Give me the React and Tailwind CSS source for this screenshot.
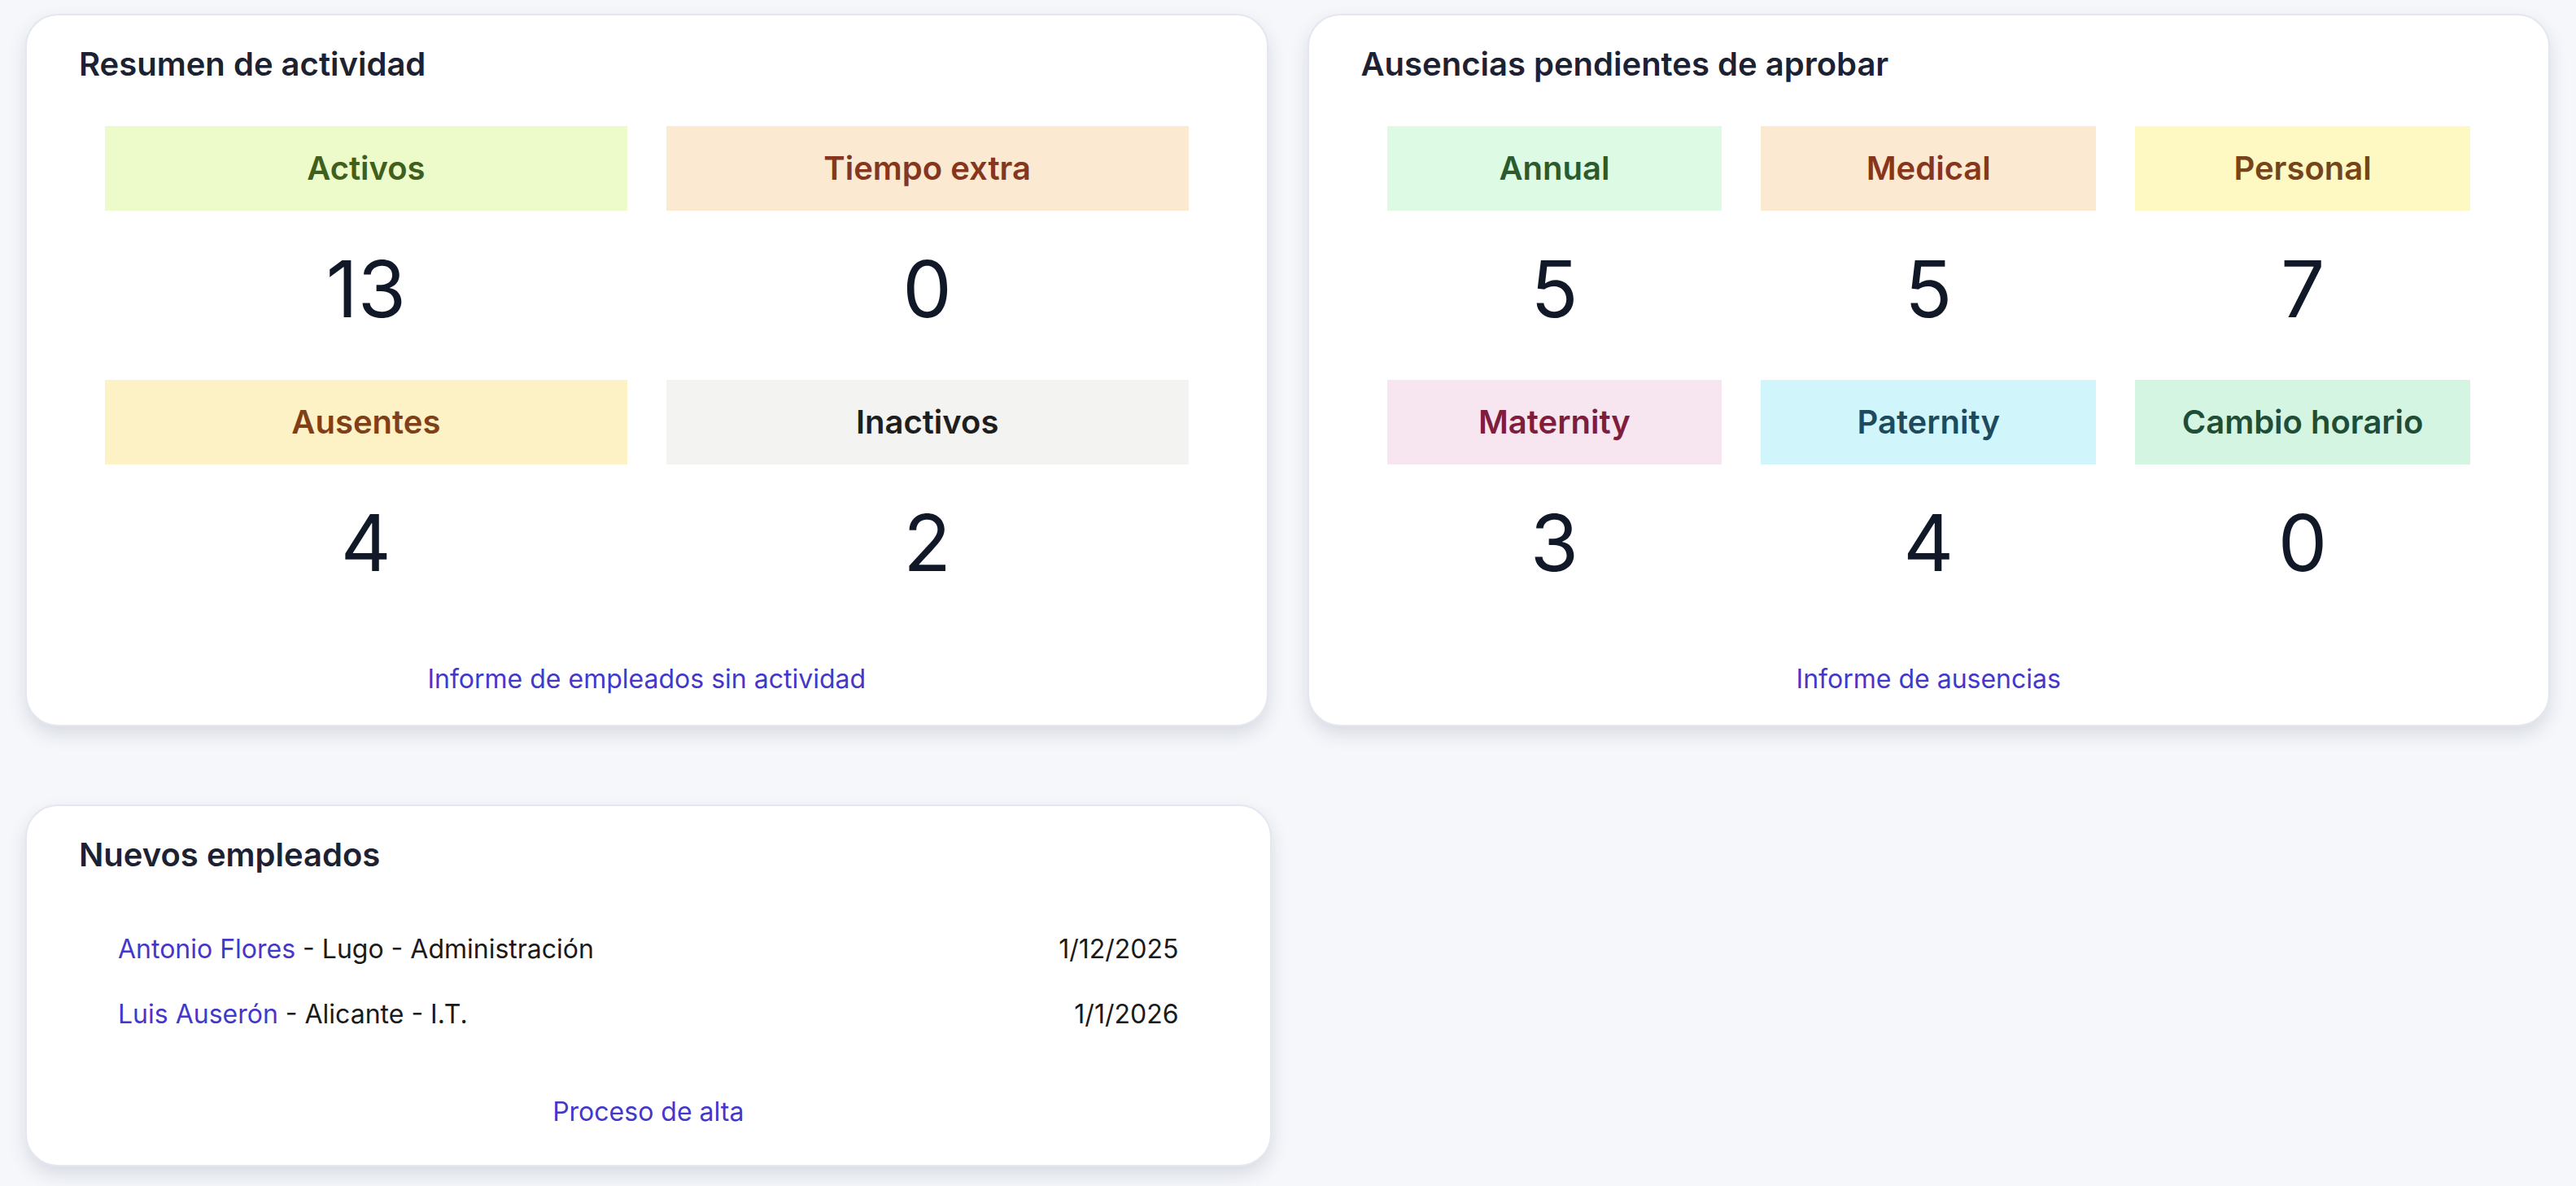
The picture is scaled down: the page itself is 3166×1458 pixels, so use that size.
const actividad = [
  { label: 'Activos', value: 13, box: 'bg-[#ecfbc9] text-[#3f5f1a]' },
  { label: 'Tiempo extra', value: 0, box: 'bg-[#fbe9d2] text-[#86361d]' },
  { label: 'Ausentes', value: 4, box: 'bg-[#fdf2c6] text-[#7f3f17]' },
  { label: 'Inactivos', value: 2, box: 'bg-[#f3f3f2] text-[#1e1e1e]' },
]

const ausencias = [
  { label: 'Annual', value: 5, box: 'bg-[#dcfae4] text-[#2a5a2e]' },
  { label: 'Medical', value: 5, box: 'bg-[#fbe9d2] text-[#86361d]' },
  { label: 'Personal', value: 7, box: 'bg-[#fef8c2] text-[#75441a]' },
  { label: 'Maternity', value: 3, box: 'bg-[#f7e6ef] text-[#7f1d3d]' },
  { label: 'Paternity', value: 4, box: 'bg-[#d0f6fb] text-[#1f4a5e]' },
  { label: 'Cambio horario', value: 0, box: 'bg-[#d3f5e1] text-[#1f4d36]' },
]

const nuevos = [
  { name: 'Antonio Flores', rest: ' - Lugo - Administración', date: '1/12/2025' },
  { name: 'Luis Auserón', rest: ' - Alicante - I.T.', date: '1/1/2026' },
]

function Card({ title, children }) {
  return (
    <section className="rounded-[40px] border-2 border-[#e4e7ef] bg-white px-16 pt-8 shadow-[0_10px_22px_rgba(30,35,60,0.13)]">
      <h2 className="text-[40px] leading-[56px] font-semibold text-[#1d2233]">{title}</h2>
      {children}
    </section>
  )
}

function StatGrid({ items, cols }) {
  return (
    <div className={`mt-12 grid gap-x-12 gap-y-4 px-8 ${cols}`}>
      {items.map((item) => (
        <div key={item.label} className="text-center">
          <div className={`py-6 text-[40px] leading-[56px] font-semibold ${item.box}`}>{item.label}</div>
          <div className="py-12 text-[96px] leading-[96px] font-normal text-[#111827]">{item.value}</div>
        </div>
      ))}
    </div>
  )
}

export default function App() {
  return (
    <main
      className="min-h-screen bg-[#f5f7fb] pl-[31px] pr-8 pt-[17px] pb-8"
      style={{ fontFamily: 'Inter, "Noto Sans", sans-serif' }}
    >
      <div className="grid grid-cols-2 gap-x-12 gap-y-[96px]">
        <Card title="Resumen de actividad">
          <StatGrid items={actividad} cols="grid-cols-2" />
          <div className="mt-12 pb-8 text-center">
            <a href="#" className="text-[32px] leading-[48px] text-[#4338ca]">
              Informe de empleados sin actividad
            </a>
          </div>
        </Card>

        <Card title="Ausencias pendientes de aprobar">
          <StatGrid items={ausencias} cols="grid-cols-3" />
          <div className="mt-12 pb-8 text-center">
            <a href="#" className="text-[32px] leading-[48px] text-[#4338ca]">
              Informe de ausencias
            </a>
          </div>
        </Card>

        <div className="-mr-1">
          <Card title="Nuevos empleados">
            <ul className="mt-12 px-12">
              {nuevos.map((n) => (
                <li key={n.name} className="flex items-center justify-between py-4 text-[32px] leading-[48px] text-[#1a1a1a]">
                  <span>
                    <a href="#" className="text-[#4338ca]">{n.name}</a>
                    {n.rest}
                  </span>
                  <span>{n.date}</span>
                </li>
              ))}
            </ul>
            <div className="mt-14 pb-[41px] text-center">
              <a href="#" className="text-[32px] leading-[48px] text-[#4338ca]">
                Proceso de alta
              </a>
            </div>
          </Card>
        </div>
      </div>
    </main>
  )
}
